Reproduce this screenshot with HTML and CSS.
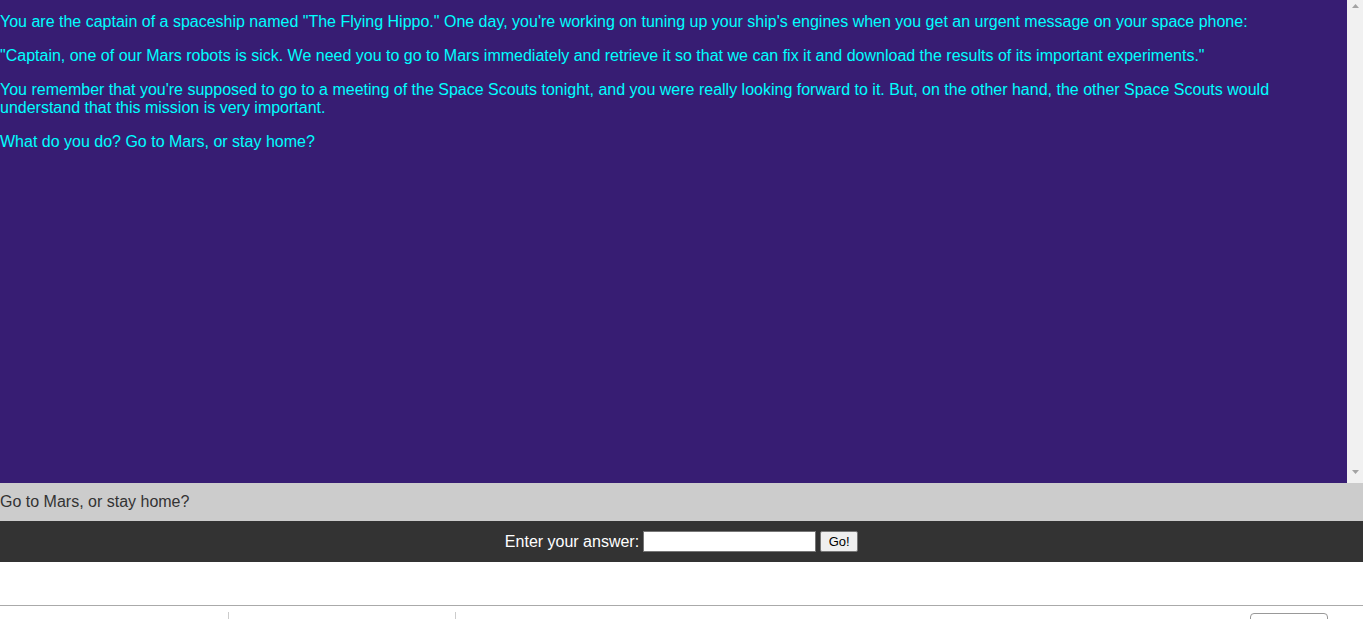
FILE: index.html
```html
<!DOCTYPE html>
<html>
<head>
<meta charset="utf-8">
<link rel="stylesheet" href="styles.css">
</head>
<body>
<div class="story">
  <div class="story-text">
    <p>You are the captain of a spaceship named "The Flying Hippo." One day, you're working on tuning up your ship's engines when you get an urgent message on your space phone:</p>
    <p>"Captain, one of our Mars robots is sick. We need you to go to Mars immediately and retrieve it so that we can fix it and download the results of its important experiments."</p>
    <p>You remember that you're supposed to go to a meeting of the Space Scouts tonight, and you were really looking forward to it. But, on the other hand, the other Space Scouts would understand that this mission is very important.</p>
    <p>What do you do? Go to Mars, or stay home?</p>
  </div>
  <div class="scrollbar">
    <svg class="arrow" width="16" height="16" viewBox="0 0 16 16"><polygon points="5,9 8.5,5 12,9" fill="#a3a3a3"/></svg>
    <svg class="arrow" width="16" height="16" viewBox="0 0 16 16"><polygon points="5,5 8.5,9 12,5" fill="#a3a3a3"/></svg>
  </div>
</div>
<div class="question">Go to Mars, or stay home?</div>
<form class="answer">
  <label class="answer-label" for="ans">Enter your answer:</label>
  <input class="answer-input" id="ans" type="text">
  <button class="answer-btn" type="button">Go!</button>
</form>
<div class="spacer"></div>
<div class="toolbar">
  <div class="tool-cell tool-first"></div>
  <div class="tool-cell tool-second"></div>
  <div class="tool-cell tool-rest"></div>
  <div class="tool-btn"></div>
</div>
</body>
</html>
```

FILE: styles.css
```css
html, body {
  margin: 0;
  padding: 0;
  background: #ffffff;
  font-family: "Liberation Sans", Arial, sans-serif;
  overflow: hidden;
}

.story {
  height: 483px;
  display: flex;
  background: #371d73;
}

.story-text {
  flex: 1;
  min-width: 0;
  color: #00ffff;
  font-size: 16px;
  line-height: 18px;
  overflow: hidden;
}

.story-text p {
  margin: 16px 0;
}

.story-text p:first-child {
  margin-top: 13px;
}

.scrollbar {
  width: 16px;
  background: #f1f1f1;
  display: flex;
  flex-direction: column;
  justify-content: space-between;
}

.arrow {
  display: block;
  width: 16px;
  height: 16px;
}

.scrollbar .arrow:first-child {
  margin-top: -1px;
}

.scrollbar .arrow:last-child {
  margin-bottom: 2px;
}

.question {
  height: 38px;
  background: #cccccc;
  color: #333333;
  font-size: 16px;
  line-height: 38px;
}

.answer {
  margin: 0;
  height: 41px;
  background: #333333;
  display: flex;
  align-items: center;
  justify-content: center;
  gap: 4px;
}

.answer-label {
  color: #ffffff;
  font-size: 16px;
}

.answer-input {
  width: 173px;
  height: 21px;
  box-sizing: border-box;
  border: 1px solid #767676;
  background: #ffffff;
  padding: 1px 2px;
  margin: 0;
  font-family: "Liberation Sans", Arial, sans-serif;
  font-size: 13px;
}

.answer-btn {
  width: 38px;
  height: 21px;
  box-sizing: border-box;
  border: 1px solid #767676;
  border-radius: 2px;
  background: #efefef;
  color: #000000;
  font-family: "Liberation Sans", Arial, sans-serif;
  font-size: 13px;
  padding: 0;
  margin: 0;
}

.spacer {
  height: 43px;
}

.toolbar {
  border-top: 1px solid #aaaaaa;
  height: 40px;
  display: flex;
  align-items: flex-start;
}

.tool-cell {
  height: 30px;
  margin-top: 6px;
}

.tool-first {
  width: 228px;
  border-right: 1px solid #cccccc;
}

.tool-second {
  width: 226px;
  border-right: 1px solid #cccccc;
}

.tool-rest {
  flex: 1;
}

.tool-btn {
  width: 76px;
  height: 30px;
  margin-top: 7px;
  margin-right: 35px;
  border: 1px solid #999999;
  border-radius: 4px;
}
```
